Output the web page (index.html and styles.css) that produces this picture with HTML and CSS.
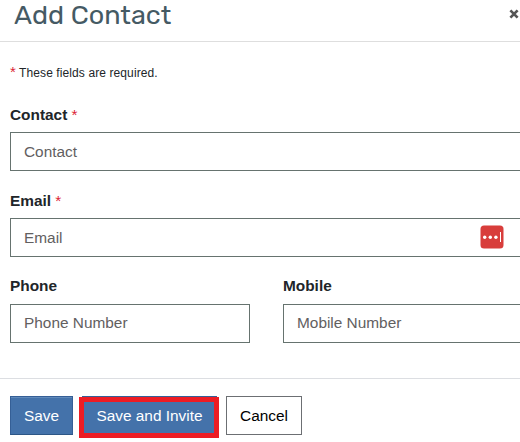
FILE: index.html
```html
<!DOCTYPE html>
<html lang="en">
<head>
<meta charset="utf-8">
<title>Add Contact</title>
<link rel="stylesheet" href="styles.css">
</head>
<body>
<form class="dialog">
  <header class="dialog-header">
    <h1 class="title">Add Contact</h1>
    <button class="close" type="button" aria-label="Close">
      <svg width="10" height="10" viewBox="0 0 10 10"><path d="M1.4 1.4 8.6 8.6M8.6 1.4 1.4 8.6" stroke="#555" stroke-width="2.7"/></svg>
    </button>
  </header>
  <main class="fields">
    <p class="note"><span class="star">*</span> These fields are required.</p>
    <div class="field">
      <label class="label" for="contact">Contact <span class="star">*</span></label>
      <input class="input" id="contact" placeholder="Contact">
    </div>
    <div class="field">
      <label class="label" for="email">Email <span class="star">*</span></label>
      <div class="input-wrap">
        <input class="input" id="email" placeholder="Email">
        <svg class="manager" width="24" height="24" viewBox="0 0 24 24"><rect x=".5" y=".5" width="23" height="23" rx="3.5" fill="#d83d3b"/><g fill="#fff"><circle cx="4.7" cy="12.2" r="1.7"/><circle cx="10.3" cy="12.2" r="1.7"/><circle cx="15.9" cy="12.2" r="1.7"/><rect x="20" y="7" width="1" height="10"/></g></svg>
      </div>
    </div>
    <div class="row">
      <div class="field">
        <label class="label" for="phone">Phone</label>
        <input class="input" id="phone" placeholder="Phone Number">
      </div>
      <div class="field">
        <label class="label" for="mobile">Mobile</label>
        <input class="input" id="mobile" placeholder="Mobile Number">
      </div>
    </div>
  </main>
  <footer class="actions">
    <button class="btn primary save" type="button">Save</button>
    <span class="highlight"><button class="btn primary invite" type="button">Save and Invite</button></span>
    <button class="btn cancel" type="button">Cancel</button>
  </footer>
</form>
</body>
</html>
```
FILE: styles.css
```css
*, *::after { box-sizing: border-box; }
html, body { margin: 0; height: 442px; overflow: hidden; background: #fff; }
body { font: 15.4px/18px "Liberation Sans", Arial, sans-serif; color: #212529; }
.dialog { width: 533px; }
.dialog-header { display: flex; height: 42px; padding-left: 14px; border-bottom: 1px solid #dedede; }
.title { margin: -2px 0 0; width: 495px; font: 400 27px/34px Rubik, Roboto, sans-serif; color: #455a64; }
.close { width: 10px; height: 10px; margin-top: 9px; padding: 0; border: 0; background: none; }
.close svg { display: block; }
.fields { height: 336px; padding: 23px 0 0 10px; }
.note { height: 16px; margin: 0 0 25px; font-size: 12px; line-height: 16px; letter-spacing: .1px; }
.star { color: #dc1f35; font-weight: 400; }
.note .star { font-size: 15px; line-height: 12px; letter-spacing: 0; }
.field { margin-bottom: 21px; }
.label { display: block; height: 18px; margin-bottom: 8px; font-weight: 700; }
.input { display: block; width: 100%; height: 39px; padding: 0 13px; border: 1px solid #66736f; border-radius: 0; background: #fff; font: inherit; }
.input::placeholder { color: #62605f; opacity: 1; }
.input-wrap { position: relative; }
.manager { position: absolute; top: 7px; left: 470px; }
.row { display: grid; grid-template-columns: 240px 240px; gap: 33px; }
.row .label { line-height: 16px; }
.row .input { padding-bottom: 2px; }
.actions { display: flex; align-items: flex-start; height: 64px; padding: 17px 0 0 10px; border-top: 1px solid #dcdee2; }
.btn { height: 39px; padding: 0; border: 1px solid #355f96; font: inherit; }
.primary { color: #fff; background: #4472aa; border-bottom-color: #2d5686; box-shadow: inset 0 1px #6089ba; }
.save { width: 63px; }
.highlight { position: relative; width: 135px; height: 39px; margin-left: 9px; }
.highlight::after { content: ""; position: absolute; top: 1px; left: -3px; width: 140px; height: 41px; border: 5px solid #ed1c24; }
.invite { width: 135px; }
.cancel { width: 76px; margin-left: 9px; color: #000; background: #fff; border-color: #6c6f73; }
```
